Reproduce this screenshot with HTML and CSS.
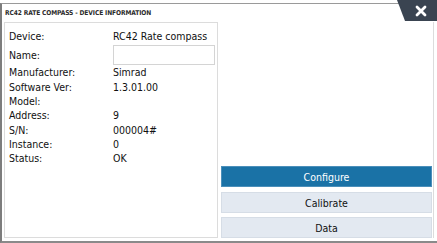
FILE: index.html
```html
<!DOCTYPE html>
<html>
<head>
  <title>RC42 Rate compass - Device information</title>
  <link rel="stylesheet" href="styles.css">
</head>
<body>
  <div class="dialog">
    <div class="header">
      <span class="title">RC42 RATE COMPASS - DEVICE INFORMATION</span>
    </div>
    <!-- close tab sits over the top border -->
    <button class="close" aria-label="Close">
      <svg width="12" height="12" viewBox="0 0 12 12">
        <path d="M2 2 L10 10 M10 2 L2 10" stroke="#fff" stroke-width="2.8" stroke-linecap="round" />
      </svg>
    </button>
    <div class="body">
      <div class="info">
        <div class="row"><span class="label">Device:</span><span class="value">RC42 Rate compass</span></div>
        <div class="row name"><span class="label">Name:</span><input type="text" class="name-box" /></div>
        <div class="row"><span class="label">Manufacturer:</span><span class="value">Simrad</span></div>
        <div class="row"><span class="label">Software Ver:</span><span class="value">1.3.01.00</span></div>
        <div class="row"><span class="label">Model:</span><span class="value"></span></div>
        <div class="row"><span class="label">Address:</span><span class="value">9</span></div>
        <div class="row"><span class="label">S/N:</span><span class="value">000004#</span></div>
        <div class="row"><span class="label">Instance:</span><span class="value">0</span></div>
        <div class="row"><span class="label">Status:</span><span class="value">OK</span></div>
      </div>
      <div class="actions">
        <button class="btn primary">Configure</button>
        <button class="btn">Calibrate</button>
        <button class="btn">Data</button>
      </div>
    </div>
  </div>
</body>
</html>
```

FILE: styles.css
```css
* { box-sizing: border-box; font-family: "DejaVu Sans Condensed", "Liberation Sans Narrow", "DejaVu Sans", sans-serif; }
body { margin: 0; background: #fff; }

.dialog {
  position: relative;
  width: 437px;
  height: 243px;
  margin: 0;
  padding-top: 3px;
  display: flex;
  flex-direction: column;
}
.header {
  height: 19px;
  border-top: 1px solid #9a9a9a;
  border-left: 2px solid #7d7d7d;
  display: flex;
  align-items: center;
  padding-left: 3px;
}
.title {
  font-size: 6.6px;
  font-weight: bold;
  color: #2b2b2b;
  letter-spacing: -0.1px;
}
.close {
  position: absolute;
  top: 0;
  right: 0;
  width: 40px;
  height: 21px;
  border: 0;
  padding: 0 0 0 8px;
  background: #3a4451;
  clip-path: polygon(0 0, 100% 0, 100% 100%, 8px 100%);
  display: flex;
  align-items: center;
  justify-content: center;
}

.body {
  flex: 1;
  display: flex;
  gap: 3px;
  padding: 0 3px 3px 2px;
  border-left: 2px solid #7d7d7d;
  border-bottom: 2px solid #8a8a8a;
}
.info {
  width: 214px;
  border: 1px solid #dcdcdc;
  padding: 6px 0 0 4px;
}
.row {
  display: flex;
  height: 14.3px;
  align-items: center;
  font-size: 10.5px;
  color: #111;
}
.label { width: 104px; }
.row.name { height: 21px; margin: 1px 0 0; }
.name-box {
  width: 102px;
  height: 20px;
  border: 1px solid #d4d4d4;
  border-radius: 0;
  padding: 0;
}

.actions {
  flex: 1;
  display: flex;
  flex-direction: column;
  justify-content: flex-end;
  gap: 4px;
  padding-bottom: 0;
  border-right: 1px solid #dcdcdc;
  padding-right: 1px;
}
.btn {
  height: 21px;
  border: 1px solid #d6dde6;
  background: #e3e9f1;
  color: #111;
  font-size: 10.5px;
  cursor: pointer;
}
.btn.primary {
  background: #1a72a6;
  border-color: #4b8fba;
  color: #fff;
  margin-bottom: 1px;
}
```
